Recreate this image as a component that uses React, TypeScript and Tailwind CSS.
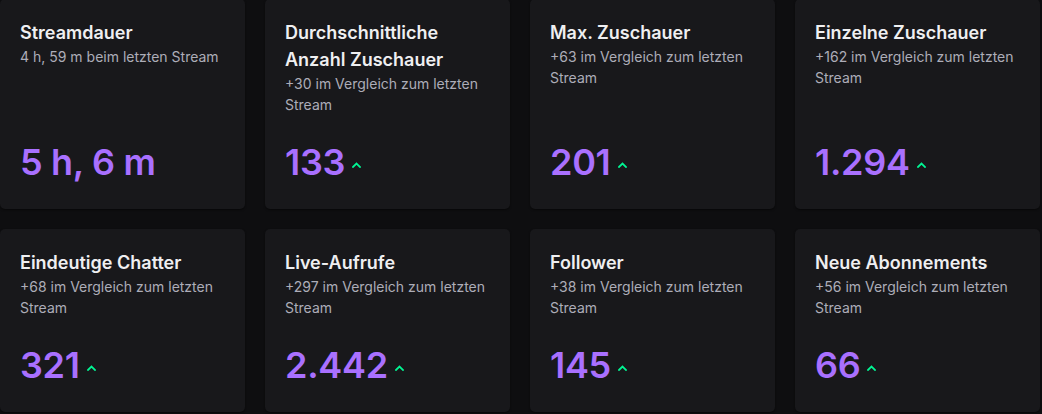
import React from 'react';

interface Stat {
  title: string;
  subtitle: string;
  value: string;
  up?: boolean;
}

const stats: Stat[] = [
  { title: 'Streamdauer', subtitle: '4 h, 59 m beim letzten Stream', value: '5 h, 6 m' },
  { title: 'Durchschnittliche Anzahl Zuschauer', subtitle: '+30 im Vergleich zum letzten Stream', value: '133', up: true },
  { title: 'Max. Zuschauer', subtitle: '+63 im Vergleich zum letzten Stream', value: '201', up: true },
  { title: 'Einzelne Zuschauer', subtitle: '+162 im Vergleich zum letzten Stream', value: '1.294', up: true },
  { title: 'Eindeutige Chatter', subtitle: '+68 im Vergleich zum letzten Stream', value: '321', up: true },
  { title: 'Live-Aufrufe', subtitle: '+297 im Vergleich zum letzten Stream', value: '2.442', up: true },
  { title: 'Follower', subtitle: '+38 im Vergleich zum letzten Stream', value: '145', up: true },
  { title: 'Neue Abonnements', subtitle: '+56 im Vergleich zum letzten Stream', value: '66', up: true },
];

const ChevronUp: React.FC = () => (
  <svg width="9" height="6" viewBox="0 0 9 6" className="ml-[7px] mt-[6px] shrink-0" fill="none">
    <polyline points="1,5 4.5,1.5 8,5" stroke="#00f593" strokeWidth="1.8" strokeLinecap="square" />
  </svg>
);

const StatCard: React.FC<{ stat: Stat }> = ({ stat }) => (
  <div className="bg-[#18181b] rounded-[5px] p-5 flex flex-col shadow-[0_1px_2px_rgba(0,0,0,0.5)]">
    <h3 className="text-[18px] leading-[27px] font-semibold text-[#efeff1]">{stat.title}</h3>
    <p className="text-[14px] leading-[21px] text-[#adadb8]">{stat.subtitle}</p>
    <div className="mt-auto pt-5 flex items-center">
      <span className="text-[36px] leading-[54px] font-semibold tracking-[-0.3px] text-[#a970ff]">{stat.value}</span>
      {stat.up && <ChevronUp />}
    </div>
  </div>
);

const App: React.FC = () => {
  return (
    <div
      className="min-h-screen bg-[#0e0e10] overflow-hidden"
      style={{ fontFamily: 'Inter, "Noto Sans", sans-serif' }}
    >
      <div className="grid grid-cols-4 gap-5 w-[1040px] -mt-px">
        {stats.map((s) => (
          <StatCard key={s.title} stat={s} />
        ))}
      </div>
    </div>
  );
};

export default App;
